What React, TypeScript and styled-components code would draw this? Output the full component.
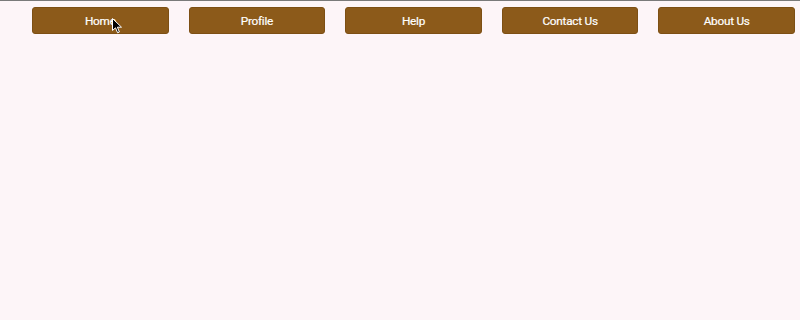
import styled, { createGlobalStyle } from "styled-components";

const GlobalStyle = createGlobalStyle`
  html, body {
    margin: 0;
    padding: 0;
    background: #fdf5f8;
  }
  body {
    font-family: Roboto, "Liberation Sans", sans-serif;
    border-top: 1px solid #7a7a7a;
    min-height: 319px;
  }
`;

const links = ["Home", "Profile", "Help", "Contact Us", "About Us"];

const NavBar = styled.nav`
  display: flex;
  gap: 20px;
  padding: 6px 5px 0 32px;
`;

const NavButton = styled.button`
  position: relative;
  flex: 1;
  height: 27px;
  background: #8c5a1a;
  border: 1px solid #7d4f14;
  border-radius: 3px;
  color: #ffffff;
  font-family: Roboto, "Liberation Sans", sans-serif;
  font-size: 11.8px;
  letter-spacing: -0.25px;
  -webkit-text-stroke: 0.2px #ffffff;
  cursor: pointer;
  padding: 0;
`;

const Cursor = styled.svg`
  position: absolute;
  left: 79px;
  top: 10px;
  pointer-events: none;
`;

export default function App() {
  return (
    <>
      <GlobalStyle />
      <NavBar>
        {links.map((label, i) => (
          <NavButton key={label}>
            {label}
            {i === 0 && (
              <Cursor width="11" height="16" viewBox="0 0 11 16">
                <path
                  d="M0.5 0.5 L0.5 12.5 L3.5 9.8 L5.6 14.8 L7.4 14 L5.4 9.2 L9.5 9.2 Z"
                  fill="#000"
                  stroke="#fff"
                  strokeWidth="1"
                  strokeLinejoin="round"
                />
              </Cursor>
            )}
          </NavButton>
        ))}
      </NavBar>
    </>
  );
}
